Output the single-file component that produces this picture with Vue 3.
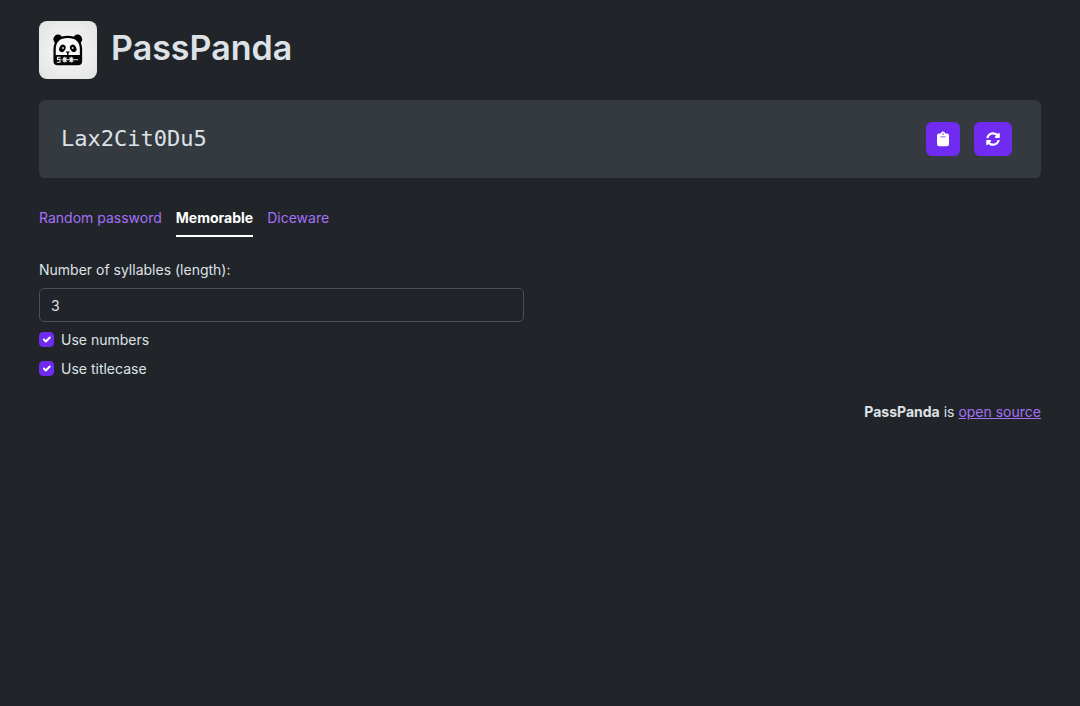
<script setup>
import { ref } from 'vue'

const password = ref('Lax2Cit0Du5')
const syllables = ref('3')
const useNumbers = ref(true)
const useTitlecase = ref(true)
const active = ref('Memorable')
const tabs = ['Random password', 'Memorable', 'Diceware']

const consonants = 'bcdfghjklmnprstvxz'
const vowels = 'aeiou'
const pick = (set) => set[Math.floor(Math.random() * set.length)]

function copy() {
  navigator.clipboard?.writeText(password.value)
}

function generate() {
  let out = ''
  for (let i = 0; i < Number(syllables.value); i++) {
    let part = pick(consonants) + pick(vowels) + pick(consonants)
    if (useTitlecase.value) part = part[0].toUpperCase() + part.slice(1)
    out += part + (useNumbers.value ? pick('0123456789') : '')
  }
  password.value = out
}
</script>

<template>
  <main class="page">
    <header class="brand">
      <svg class="logo" viewBox="0 0 58 58" aria-hidden="true">
        <defs>
          <radialGradient id="tile" cx="50%" cy="50%" r="70%">
            <stop offset="0" stop-color="#f8f8f8" />
            <stop offset="1" stop-color="#e2e3e3" />
          </radialGradient>
        </defs>
        <rect width="58" height="58" rx="8" fill="url(#tile)" />
        <circle cx="19" cy="18.2" r="4.6" fill="#050505" />
        <circle cx="38.6" cy="18.2" r="4.6" fill="#050505" />
        <path d="M15.6 40V28.5C15.6 20 21 15.8 28.8 15.8S42 20 42 28.5V40q0 3.2-3.2 3.2h-20q-3.2 0-3.2-3.2Z" fill="#f8f8f8" stroke="#050505" stroke-width="2.3" />
        <path d="M15.6 34H42V40q0 3.2-3.2 3.2h-20q-3.2 0-3.2-3.2Z" fill="#050505" />
        <ellipse cx="23.4" cy="27.4" rx="3" ry="3.9" fill="#050505" transform="rotate(28 23.4 27.4)" />
        <ellipse cx="34.2" cy="27.4" rx="3" ry="3.9" fill="#050505" transform="rotate(-28 34.2 27.4)" />
        <circle cx="24" cy="27" r="1" fill="#ddd" />
        <circle cx="33.6" cy="27" r="1" fill="#ddd" />
        <path d="M26.6 30.6h4.4l-1.5 1.7V34.5h-1.4v-2.2Z" fill="#050505" />
        <path d="M21.7 36.2H18.5V38.4H21V41.2H17.7M22.5 38.8H39M25.8 35.8V41.6M32.3 35.8V41.6M24 36.7l3.6 4.1M27.6 36.7l-3.6 4.1M30.5 36.7l3.6 4.1M34.1 36.7l-3.6 4.1" fill="none" stroke="#eee" stroke-width="1.1" />
      </svg>
      <h1>PassPanda</h1>
    </header>

    <section class="result">
      <output class="password">{{ password }}</output>
      <div class="actions">
        <button type="button" aria-label="Copy" @click="copy">
          <svg class="clip" viewBox="0 0 12 16" aria-hidden="true">
            <path fill-rule="evenodd" d="M2 2.5H3.7Q4.3.5 6 .5T8.3 2.5H10Q12 2.5 12 4.5V13.2Q12 15.2 10 15.2H2Q0 15.2 0 13.2V4.5Q0 2.5 2 2.5ZM6 2.2a.8.8 0 1 0 0 1.6.8.8 0 0 0 0-1.6ZM3.6 5.5a.4.4 0 0 0 0 .8H8.4a.4.4 0 0 0 0-.8Z" />
          </svg>
        </button>
        <button type="button" aria-label="Generate" @click="generate">
          <svg class="sync" viewBox="0 0 512 512" aria-hidden="true"><path d="M370.72 133.28C339.458 104.008 298.888 87.962 255.848 88c-77.458.068-144.328 53.178-162.791 126.85-1.344 5.363-6.122 9.15-11.651 9.15H24.103c-7.498 0-13.194-6.807-11.807-14.176C33.933 94.924 134.813 8 256 8c66.448 0 126.791 26.136 171.315 68.685L463.03 40.97C478.149 25.851 504 36.559 504 57.941V192c0 13.255-10.745 24-24 24H345.941c-21.382 0-32.09-25.851-16.971-40.971l41.75-41.749zM32 296h134.059c21.382 0 32.09 25.851 16.971 40.971l-41.75 41.75c31.262 29.273 71.835 45.319 114.876 45.28 77.418-.07 144.315-53.144 162.787-126.849 1.344-5.363 6.122-9.15 11.651-9.15h57.304c7.498 0 13.194 6.807 11.807 14.176C478.067 417.076 377.187 504 256 504c-66.448 0-126.791-26.136-171.315-68.685L48.97 471.03C33.851 486.149 8 475.441 8 454.059V320c0-13.255 10.745-24 24-24z" /></svg>
        </button>
      </div>
    </section>

    <nav class="tabs">
      <button
        v-for="tab in tabs"
        :key="tab"
        type="button"
        :class="{ active: tab === active }"
        @click="active = tab"
      >{{ tab }}</button>
    </nav>

    <form class="options" @submit.prevent="generate">
      <div class="fields">
        <label for="syllables">Number of syllables (length):</label>
        <input id="syllables" v-model="syllables" class="text" type="text" inputmode="numeric" />
        <div class="check">
          <input id="numbers" v-model="useNumbers" type="checkbox" />
          <label for="numbers">Use numbers</label>
        </div>
        <div class="check">
          <input id="titlecase" v-model="useTitlecase" type="checkbox" />
          <label for="titlecase">Use titlecase</label>
        </div>
      </div>
    </form>

    <footer><strong>PassPanda</strong> is <a href="#source">open source</a></footer>
  </main>
</template>

<style>
body {
  background: #212529;
}
</style>

<style scoped>
.page {
  padding: 21px 39px;
  color: #dee2e6;
  font-family: Inter, "Liberation Sans", sans-serif;
  font-size: 14px;
  line-height: 22px;
}

.brand {
  display: flex;
  gap: 14px;
  margin-bottom: 21px;
}

.logo {
  width: 58px;
  height: 58px;
}

h1 {
  margin: 5px 0 0;
  font-size: 34px;
  font-weight: 600;
  line-height: 44px;
}

.result {
  display: flex;
  align-items: center;
  justify-content: space-between;
  padding: 22px 29px 22px 22px;
  border-radius: 6px;
  background: #343a40;
}

.password {
  font-family: "DejaVu Sans Mono", monospace;
  font-size: 22px;
  line-height: 34px;
}

.actions {
  display: flex;
  gap: 14px;
}

.actions button {
  display: flex;
  align-items: center;
  height: 34px;
  padding: 0 11px;
  border: 0;
  border-radius: 6px;
  background: #6f2cf0;
}

.actions svg {
  display: block;
  fill: #fff;
}

.clip {
  width: 12px;
  height: 16px;
}

.sync {
  width: 16px;
  height: 14px;
}

.tabs {
  display: flex;
  gap: 14px;
  margin: 22px 0;
}

.tabs button {
  padding: 7px 0 6px;
  border: 0;
  border-bottom: 2px solid transparent;
  background: none;
  color: #a370f7;
  font: inherit;
}

.tabs .active {
  border-color: #fff;
  color: #fff;
  font-weight: 700;
}

.options {
  display: grid;
  grid-template-columns: 1fr 1fr;
  gap: 32px;
}

.fields {
  display: flex;
  flex-direction: column;
  gap: 7px;
}

.text {
  box-sizing: border-box;
  width: 100%;
  height: 34px;
  padding: 0 11px;
  border: 1px solid #495057;
  border-radius: 5px;
  background: #212529;
  color: #dee2e6;
  font: inherit;
}

.check {
  display: flex;
  align-items: flex-start;
  gap: 7px;
}

.check input {
  appearance: none;
  width: 15px;
  height: 15px;
  margin: 3px 0 0;
  border: 1px solid #495057;
  border-radius: 4px;
}

.check input:checked {
  border-color: #6f2cf0;
  background: #6f2cf0 url("data:image/svg+xml,%3Csvg xmlns='http://www.w3.org/2000/svg' viewBox='0 0 20 20'%3E%3Cpath fill='none' stroke='%23fff' stroke-linecap='round' stroke-linejoin='round' stroke-width='3' d='m6 10 3 3 6-6'/%3E%3C/svg%3E") center / contain no-repeat;
}

footer {
  margin-top: 21px;
  text-align: right;
}

a {
  color: #a370f7;
}
</style>
